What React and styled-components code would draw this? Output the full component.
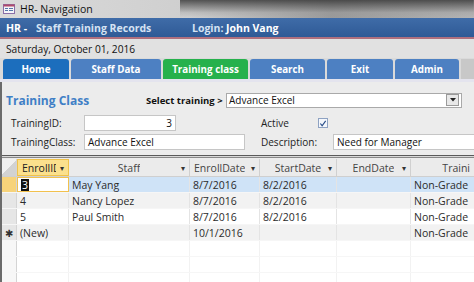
import React from 'react';
import styled, { createGlobalStyle } from 'styled-components';

const GlobalStyle = createGlobalStyle`
  html, body {
    margin: 0;
    padding: 0;
    width: 474px;
    height: 282px;
    overflow: hidden;
    background: #ececec;
    font-family: "Open Sans", "Noto Sans", sans-serif;
  }
`;

const tabs = [
  { label: 'Home', width: 66, color: '#1c6ebd' },
  { label: 'Staff Data', width: 90, color: '#4d80c2' },
  { label: 'Training class', width: 85, color: '#26b14c' },
  { label: 'Search', width: 75, color: '#4d80c2' },
  { label: 'Exit', width: 66, color: '#4d80c2' },
  { label: 'Admin', width: 64, color: '#4d80c2' },
];

const columns = [
  { key: 'id', label: 'EnrollID', width: 52 },
  { key: 'staff', label: 'Staff', width: 121, center: true },
  { key: 'enroll', label: 'EnrollDate', width: 70 },
  { key: 'start', label: 'StartDate', width: 77, center: true },
  { key: 'end', label: 'EndDate', width: 74, center: true },
  { key: 'type', label: 'Traini', width: 64, right: true },
];

const rows = [
  { id: '3', staff: 'May Yang', enroll: '8/7/2016', start: '8/2/2016', end: '', type: 'Non-Grade' },
  { id: '4', staff: 'Nancy Lopez', enroll: '8/7/2016', start: '8/2/2016', end: '', type: 'Non-Grade' },
  { id: '5', staff: 'Paul Smith', enroll: '8/7/2016', start: '8/2/2016', end: '', type: 'Non-Grade' },
  { id: '(New)', staff: '', enroll: '10/1/2016', start: '', end: '', type: 'Non-Grade', isNew: true },
];

export default function App() {
  return (
    <Window>
      <GlobalStyle />
      <TitleBar>
        <AppIcon viewBox="0 0 12 10">
          <rect x="0.5" y="0.5" width="11" height="9" fill="#f4f4f8" stroke="#8a6fa8" />
          <rect x="0.5" y="0.5" width="11" height="2" fill="#b04a6a" />
          <rect x="2" y="4" width="3" height="1" fill="#5577aa" />
          <rect x="2" y="6" width="3" height="1" fill="#5577aa" />
          <rect x="6" y="4" width="4" height="1" fill="#5577aa" />
          <rect x="6" y="6" width="4" height="1" fill="#5577aa" />
        </AppIcon>
        <TitleText>HR- Navigation</TitleText>
      </TitleBar>

      <Banner>
        <BannerHr>HR -</BannerHr>
        <BannerTitle>Staff Training Records</BannerTitle>
        <BannerLogin>Login:</BannerLogin>
        <BannerUser>John Vang</BannerUser>
      </Banner>

      <DateRow>Saturday, October 01, 2016</DateRow>

      <TabRow>
        {tabs.map((t) => (
          <Tab key={t.label} $w={t.width} $bg={t.color}>
            {t.label}
          </Tab>
        ))}
        <TabFiller />
      </TabRow>

      <Body>
        <Form>
          <TopLine>
            <FormTitle>Training Class</FormTitle>
            <SelectLabel>Select training &gt;</SelectLabel>
            <Combo>
              <span>Advance Excel</span>
              <ComboButton>
                <svg width="6" height="4" viewBox="0 0 6 4">
                  <path d="M0 0 L6 0 L3 3.5 Z" fill="#222" />
                </svg>
              </ComboButton>
            </Combo>
          </TopLine>

          <FieldRow $top={7}>
            <Label $w={73}>TrainingID:</Label>
            <Input $w={92} $right>3</Input>
            <Label $w={57} $ml={85}>Active</Label>
            <Check>
              <svg width="9" height="9" viewBox="0 0 9 9">
                <path d="M1.5 4.5 L3.5 7 L7.5 1.5" fill="none" stroke="#2a4f8a" strokeWidth="1.3" />
              </svg>
            </Check>
          </FieldRow>

          <FieldRow $top={3}>
            <Label $w={73}>TrainingClass:</Label>
            <Input $w={161}>Advance Excel</Input>
            <Label $w={72} $ml={16}>Description:</Label>
            <Input $w={145}>Need for Manager</Input>
          </FieldRow>
        </Form>

        <Divider />

        <Sheet>
          <SheetRow $header>
            <Selector $header />
            {columns.map((c, i) => (
              <HeadCell key={c.key} $w={c.width} $active={i === 0} $center={c.center} $right={c.right}>
                <HeadText>{c.label}</HeadText>
                {!c.right && <Arrow>▾</Arrow>}
              </HeadCell>
            ))}
          </SheetRow>
          {rows.map((r, ri) => (
            <SheetRow key={ri} $bg={ri === 0 ? '#cfe3f7' : ri % 2 === 1 ? '#f2f2f2' : '#ffffff'}>
              <Selector $current={ri === 0}>{r.isNew ? '✱' : ''}</Selector>
              {columns.map((c, ci) => (
                <Cell key={c.key} $w={c.width} $focus={ri === 0 && ci === 0}>
                  {ri === 0 && ci === 0 ? <Caret>{r[c.key]}</Caret> : r[c.key]}
                </Cell>
              ))}
            </SheetRow>
          ))}
          {[0, 1, 2].map((i) => (
            <SheetRow key={'e' + i} $bg="#ffffff">
              <Selector $empty />
              {columns.map((c) => (
                <Cell key={c.key} $w={c.width} $empty />
              ))}
            </SheetRow>
          ))}
        </Sheet>
      </Body>
    </Window>
  );
}

const Window = styled.div`
  width: 474px;
  height: 282px;
  display: flex;
  flex-direction: column;
  overflow: hidden;
  background: #ececec;
`;

const TitleBar = styled.div`
  height: 18px;
  flex: none;
  display: flex;
  align-items: center;
  gap: 5px;
  padding-left: 3px;
  background:
    linear-gradient(to bottom, rgba(60, 60, 60, 0.85) 0%, rgba(150, 150, 150, 0.3) 70%, rgba(200, 200, 200, 0) 100%) right / 62% 100% no-repeat,
    linear-gradient(to right, #dadada 0%, #cfcfcf 40%, #9a9a9a 70%, #b5b5b5 100%);
`;

const AppIcon = styled.svg`
  width: 12px;
  height: 10px;
`;

const TitleText = styled.span`
  font-size: 10.5px;
  color: #111;
`;

const Banner = styled.div`
  height: 19px;
  flex: none;
  display: flex;
  align-items: center;
  padding-left: 6px;
  background: linear-gradient(to bottom, #3f6ca8, #2f5a96);
  border-bottom: 2px solid #b0707e;
  font-size: 10.5px;
  font-weight: 700;
`;

const BannerHr = styled.span`
  color: #fff;
  width: 30px;
`;

const BannerTitle = styled.span`
  color: #d6e3f3;
  width: 156px;
`;

const BannerLogin = styled.span`
  color: #d6e3f3;
  width: 34px;
`;

const BannerUser = styled.span`
  color: #fff;
`;

const DateRow = styled.div`
  height: 19px;
  flex: none;
  display: flex;
  align-items: center;
  padding-left: 6px;
  background: #e1e1e1;
  font-size: 10.2px;
  color: #111;
`;

const TabRow = styled.div`
  height: 21px;
  flex: none;
  display: flex;
  align-items: flex-end;
  gap: 2px;
  padding-left: 3px;
  background: #dadada;
  border-bottom: 3px solid #e4e4ee;
`;

const Tab = styled.div`
  width: ${(p) => p.$w}px;
  height: 20px;
  display: flex;
  align-items: center;
  justify-content: center;
  background: ${(p) => p.$bg};
  border-radius: 3px 3px 0 0;
  color: #fff;
  font-size: 9.8px;
  font-weight: 700;
`;

const TabFiller = styled.div`
  flex: 1;
  height: 20px;
  background: #c8c8c8;
`;

const Body = styled.div`
  flex: 1;
  display: flex;
  flex-direction: column;
  border-left: 2px solid #6b6b6b;
`;

const Form = styled.div`
  display: flex;
  flex-direction: column;
  padding: 10px 0 0 4px;
  height: 73px;
  box-sizing: border-box;
`;

const TopLine = styled.div`
  display: flex;
  align-items: center;
  height: 16px;
`;

const FormTitle = styled.span`
  width: 140px;
  flex: none;
  font-size: 12px;
  font-weight: 700;
  color: #3f7fc6;
`;

const SelectLabel = styled.span`
  width: 80px;
  flex: none;
  white-space: nowrap;
  font-size: 9.5px;
  font-weight: 700;
  color: #111;
`;

const Combo = styled.div`
  width: 236px;
  height: 15px;
  flex: none;
  box-sizing: border-box;
  display: flex;
  align-items: center;
  justify-content: space-between;
  padding: 0 2px 0 2px;
  background: #fff;
  border: 1px solid #a9a9a9;
  font-size: 10px;
  color: #111;
`;

const ComboButton = styled.div`
  width: 11px;
  height: 10px;
  display: flex;
  align-items: center;
  justify-content: center;
  background: #e8e8e8;
  border: 1px solid #9a9a9a;
`;

const FieldRow = styled.div`
  display: flex;
  align-items: center;
  height: 16px;
  margin-top: ${(p) => p.$top}px;
  padding-left: 5px;
`;

const Label = styled.span`
  width: ${(p) => p.$w}px;
  margin-left: ${(p) => p.$ml || 0}px;
  flex: none;
  font-size: 10px;
  color: #222;
`;

const Input = styled.div`
  width: ${(p) => p.$w}px;
  height: 16px;
  flex: none;
  box-sizing: border-box;
  display: flex;
  align-items: center;
  justify-content: ${(p) => (p.$right ? 'flex-end' : 'flex-start')};
  padding: 0 3px;
  background: #fff;
  border: 1px solid #c6c6c6;
  font-size: 10px;
  color: #111;
`;

const Check = styled.div`
  width: 10px;
  height: 10px;
  box-sizing: border-box;
  display: flex;
  align-items: center;
  justify-content: center;
  background: #f4f7fc;
  border: 1px solid #8ea2c2;
`;

const Divider = styled.div`
  height: 1px;
  border-top: 1px solid #5a5a5a;
  border-bottom: 1px solid #888;
  background: #d8d8d8;
  margin-bottom: 1px;
`;

const Sheet = styled.div`
  flex: 1;
  display: flex;
  flex-direction: column;
  background: #fff;
`;

const SheetRow = styled.div`
  display: flex;
  height: ${(p) => (p.$header ? 17 : 15)}px;
  flex: none;
  background: ${(p) => (p.$header ? '#eaeaea' : p.$bg)};
  border-bottom: 1px solid ${(p) => (p.$header ? '#cfcfcf' : '#f6f6f6')};
`;

const Selector = styled.div`
  width: 14px;
  flex: none;
  display: flex;
  align-items: center;
  justify-content: center;
  font-size: 10px;
  color: #333;
  background: ${(p) => (p.$current ? '#f7d37a' : p.$empty ? '#f7f7f7' : '#e6e6e6')};
  border-right: 1px solid #d4d4d4;
  ${(p) => p.$header && 'background: linear-gradient(135deg, #f0f0f0 50%, #d2d2d2 50%);'}
`;

const HeadCell = styled.div`
  width: ${(p) => p.$w}px;
  flex: none;
  box-sizing: border-box;
  display: flex;
  align-items: center;
  justify-content: ${(p) => (p.$right ? 'flex-end' : p.$center ? 'center' : 'flex-start')};
  position: relative;
  padding: 0 4px;
  font-size: 10.5px;
  color: ${(p) => (p.$active ? '#222' : '#444')};
  background: ${(p) => (p.$active ? '#fbe08d' : '#ebebeb')};
  border-right: 1px solid #d0d0d0;
  ${(p) => p.$active && 'border: 1px solid #f0c24a; padding-right: 12px;'}
  overflow: hidden;
  white-space: nowrap;
`;

const HeadText = styled.span`
  overflow: hidden;
`;

const Arrow = styled.span`
  position: absolute;
  right: 4px;
  font-size: 8px;
  color: #333;
`;

const Cell = styled.div`
  width: ${(p) => p.$w}px;
  flex: none;
  box-sizing: border-box;
  display: flex;
  align-items: center;
  padding: 0 3px;
  font-size: 10.5px;
  color: #2b2b2b;
  white-space: nowrap;
  overflow: hidden;
  border-right: 1px solid ${(p) => (p.$empty ? '#f2f2f2' : '#e4e4e4')};
  ${(p) => p.$focus && 'background: #fff; border: 1px solid #f2c14e;'}
`;

const Caret = styled.span`
  background: #111;
  color: #fff;
  padding: 0 1px;
  line-height: 12px;
`;
